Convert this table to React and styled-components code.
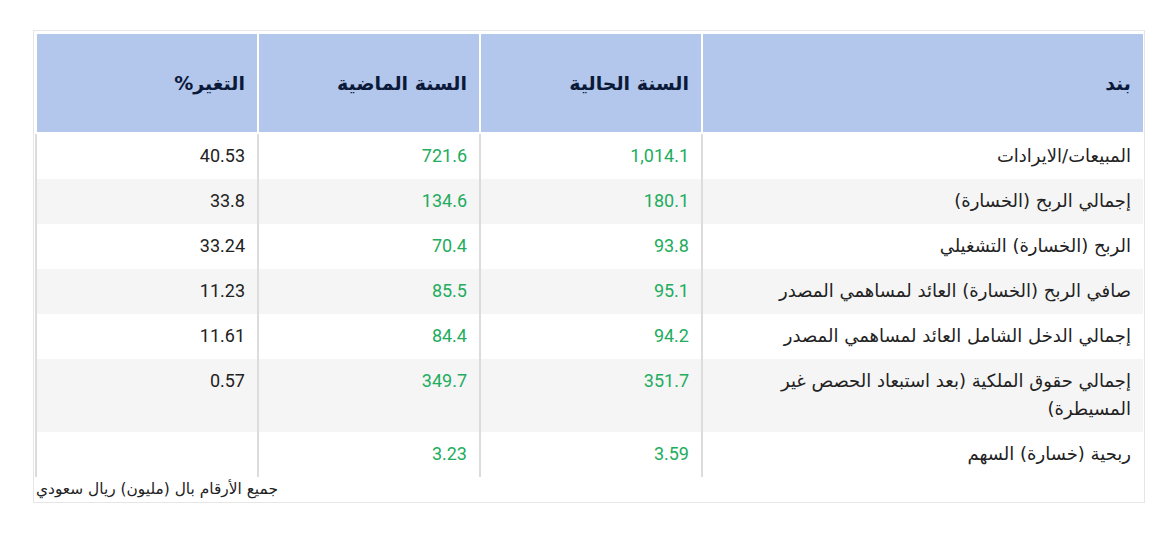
import React from "react";
import styled, { createGlobalStyle } from "styled-components";

const Global = createGlobalStyle`
  html, body { margin: 0; padding: 0; background: #ffffff; }
  body { font-family: "Roboto", "DejaVu Sans", sans-serif; }
`;

const Page = styled.div`
  padding: 30px 0 0 33px;
`;

const Card = styled.div`
  width: 1112px;
  box-sizing: border-box;
  border: 1px solid #e6e6e6;
  padding: 2px 1px 0 1px;
`;

const Table = styled.table`
  width: 100%;
  border-collapse: collapse;
  table-layout: fixed;
  direction: rtl;
`;

const Th = styled.th`
  background: #b3c6ec;
  color: #0c1a3a;
  font-family: "DejaVu Sans", sans-serif;
  font-weight: 700;
  font-size: 19px;
  text-align: right;
  height: 99px;
  padding: 0 12px;
  box-sizing: border-box;
  border-left: 2px solid #ffffff;
  border-top: 1px solid #ffffff;
  border-bottom: 2px solid #ffffff;
  vertical-align: middle;
  width: ${(p) => p.$w}px;
`;

const Tr = styled.tr`
  background: ${(p) => (p.$alt ? "#f5f5f5" : "#ffffff")};
`;

const Td = styled.td`
  text-align: right;
  vertical-align: top;
  padding: 8.5px 12px 8.5px 12px;
  line-height: 28px;
  font-size: 18px;
  font-family: ${(p) =>
    p.$label ? '"DejaVu Sans", sans-serif' : '"Roboto", "DejaVu Sans", sans-serif'};
  color: ${(p) => (p.$green ? "#22ac5e" : "#222222")};
  border-left: 2px solid #dcdcdc;
`;

const Note = styled.div`
  direction: rtl;
  text-align: left;
  font-family: "DejaVu Sans", sans-serif;
  font-size: 15.4px;
  color: #222;
  padding: 3px 0 4px 1px;
  line-height: 18px;
`;

const rows = [
  ["المبيعات/الايرادات", "1,014.1", "721.6", "40.53"],
  ["إجمالي الربح (الخسارة)", "180.1", "134.6", "33.8"],
  ["الربح (الخسارة) التشغيلي", "93.8", "70.4", "33.24"],
  ["صافي الربح (الخسارة) العائد لمساهمي المصدر", "95.1", "85.5", "11.23"],
  ["إجمالي الدخل الشامل العائد لمساهمي المصدر", "94.2", "84.4", "11.61"],
  ["إجمالي حقوق الملكية (بعد استبعاد الحصص غير المسيطرة)", "351.7", "349.7", "0.57"],
  ["ربحية (خسارة) السهم", "3.59", "3.23", ""],
];

export default function App() {
  return (
    <Page>
      <Global />
      <Card>
        <Table>
          <thead>
            <tr>
              <Th $w={441}>بند</Th>
              <Th $w={222}>السنة الحالية</Th>
              <Th $w={222}>السنة الماضية</Th>
              <Th $w={222}>التغير%</Th>
            </tr>
          </thead>
          <tbody>
            {rows.map((r, i) => (
              <Tr key={i} $alt={i % 2 === 1}>
                <Td $label>{r[0]}</Td>
                <Td $green>{r[1]}</Td>
                <Td $green>{r[2]}</Td>
                <Td>{r[3]}</Td>
              </Tr>
            ))}
          </tbody>
        </Table>
        <Note>جميع الأرقام بال (مليون) ريال سعودي</Note>
      </Card>
    </Page>
  );
}
